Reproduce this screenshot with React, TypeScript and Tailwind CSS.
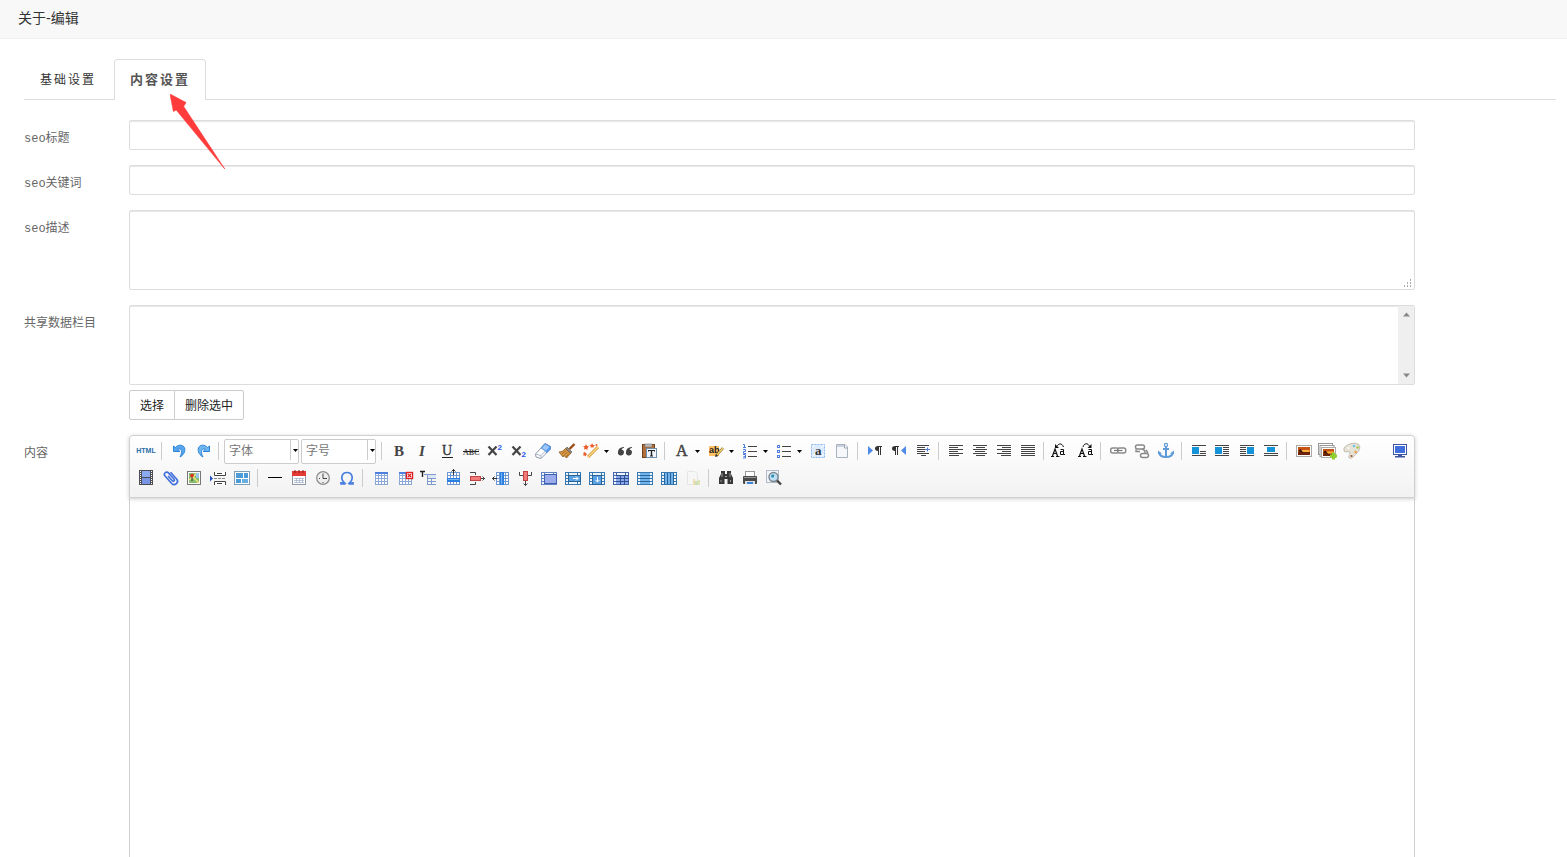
import type { ReactNode } from "react";

const range = (n: number) => Array.from({ length: n }, (_, i) => i);

const Lines = ({ rows, color = "#444" }: { rows: [number, number, number][]; color?: string }) => (
  <>
    {rows.map(([x, y, w], i) => (
      <rect key={i} x={x} y={y} width={w} height="1" fill={color} />
    ))}
  </>
);

// small grid used by all the table tools
const Grid = ({ x = 4, y = 4, w = 13, h = 13, step = 3, color = "#8aa8d6", fill = "#fff" }) => (
  <>
    <rect x={x} y={y} width={w} height={h} fill={fill} />
    {range(Math.floor((w - 1) / step) + 1).map((i) => (
      <rect key={"c" + i} x={x + i * step} y={y} width="1" height={h} fill={color} />
    ))}
    {range(Math.floor((h - 1) / step) + 1).map((i) => (
      <rect key={"r" + i} x={x} y={y + i * step} width={w} height="1" fill={color} />
    ))}
  </>
);

const CellFrame = ({ children, edge = "#3a78b0" }: { children?: ReactNode; edge?: string }) => (
  <>
    <rect x="2" y="4" width="16" height="13" fill="#eef5fc" />
    <path d="M2 4.5H18M2 16.5H18M2.5 4V17M17.5 4V17" stroke={edge} />
    <path d="M2 7.5H5M15 7.5H18M2 10.5H5M15 10.5H18M2 13.5H5M15 13.5H18M5.5 4V17M14.5 4V17" stroke={edge} />
    {children}
  </>
);

const Pilcrow = ({ x }: { x: number }) => (
  <path d={`M${x + 7} 5H${x + 3}C${x - 1} 5 ${x - 1} 10 ${x + 3} 10V14H${x + 4}V6H${x + 5}V14H${x + 6}V6H${x + 7}Z`} fill="#333" />
);

const Picture = ({ x, y, w, h }: { x: number; y: number; w: number; h: number }) => (
  <>
    <rect x={x} y={y} width={w} height={h} fill="#fff" stroke="#aaa" />
    <rect x={x + 1.5} y={y + 1.5} width={w - 3} height={h - 3} fill="#c65312" />
    <rect x={x + 1.5} y={y + h / 2 + 1} width={w - 3} height={h / 2 - 2.5} fill="#6e2409" />
    <rect x={x + 5} y={y + h / 2 - 1} width={w - 7} height="2" fill="#f9b13b" />
    <path d={`M${x + 1.5} ${y + h / 2}L${x + 4} ${y + h / 2 - 2}L${x + 7} ${y + h / 2 + 2}Z`} fill="#3b1308" />
  </>
);

const icons: Record<string, ReactNode> = {
  undo: (
    <path
      d="M4.5 5V10.5H11L8.6 8.4C11.6 6.6 14.4 9.5 11 16C17.6 12.5 17.2 4 11.2 4.2C9 4.3 7.4 5.2 6.4 6.6Z"
      fill="#58a6ee"
      stroke="#2a84d8"
      strokeLinejoin="round"
    />
  ),
  redo: (
    <path
      d="M16.5 5V10.5H10L12.4 8.4C9.4 6.6 6.6 9.5 10 16C3.4 12.5 3.8 4 9.8 4.2C12 4.3 13.6 5.2 14.6 6.6Z"
      fill="#6db6f2"
      stroke="#2a84d8"
      strokeLinejoin="round"
    />
  ),
  bold: <text x="5" y="15" fontSize="15" fontWeight="bold" className="font-['Liberation_Serif',serif]" fill="#444">B</text>,
  italic: <text x="6" y="15" fontSize="15" fontWeight="bold" fontStyle="italic" className="font-['Liberation_Serif',serif]" fill="#444">I</text>,
  underline: (
    <>
      <text x="5" y="14" fontSize="14" className="font-['Liberation_Serif',serif]" fill="#333" stroke="#333" strokeWidth=".3">U</text>
      <rect x="5" y="16" width="11" height="1" fill="#222" />
    </>
  ),
  strike: (
    <>
      <text x="2" y="14" fontSize="8" fontWeight="bold" className="font-['Liberation_Serif',serif]" fill="#555">ABC</text>
      <rect x="2" y="10" width="16" height="1" fill="#222" />
    </>
  ),
  superscript: (
    <>
      <path d="M3.5 5.5L11.5 14M11.5 5.5L3.5 14" stroke="#444" strokeWidth="2.2" />
      <text x="12.5" y="9" fontSize="8" fontWeight="bold" className="font-['Liberation_Sans',sans-serif]" fill="#2557e6">2</text>
    </>
  ),
  subscript: (
    <>
      <path d="M3.5 5.5L11.5 14M11.5 5.5L3.5 14" stroke="#444" strokeWidth="2.2" />
      <text x="12.5" y="16" fontSize="8" fontWeight="bold" className="font-['Liberation_Sans',sans-serif]" fill="#2557e6">2</text>
    </>
  ),
  eraser: (
    <>
      <path d="M2.5 13L12 2.5L17.5 5.5V8L8 17.5L3 16Z" fill="#fff" stroke="#8d9bb0" strokeLinejoin="round" />
      <path d="M8 7L12 2.5L17.5 5.5V8L13.5 12L12.5 10Z" fill="#4f97f2" stroke="#5a8fd4" strokeWidth=".8" strokeLinejoin="round" />
      <path d="M9 7L12.3 3.5L16.5 6L13 9.5Z" fill="#9cc8fb" />
      <path d="M2.5 13L8 14.5V17.5M8 14.5L12.5 10" stroke="#a9b4c4" fill="none" />
    </>
  ),
  brush: (
    <>
      <path d="M17.5 3L12.5 8" stroke="#9a4d17" strokeWidth="2.4" />
      <path d="M10 6L15 11L13 12.5L8.5 8Z" fill="#8a8a8a" stroke="#5e4a30" strokeWidth=".6" />
      <path d="M8.5 7.5L13.5 12.5L9.5 17L7 14.5L6 16L2 11C5 11 6.5 9.5 8.5 7.5Z" fill="#d99a48" stroke="#8c5316" strokeWidth=".8" />
      <path d="M9 9.5L5 13M10.5 11L7 14.5M12 12.5L9 16" stroke="#8c5316" strokeWidth=".7" />
    </>
  ),
  wand: (
    <>
      <path d="M7 16L17 6" stroke="#d8912d" strokeWidth="3" />
      <path d="M7 16L17 6" stroke="#fbe08d" strokeWidth="1.2" />
      <path d="M5 3L6 5L8 5.5L6.5 7L6.5 9L5 8L3 8.5L3.5 6.5L2 5L4.2 5Z" fill="#ec5a26" />
      <path d="M11 2L12 4L14 4L12.5 5.5L12.5 7L11 6L9.5 7L9.8 5.2L8.5 4L10.4 3.8Z" fill="#ec5a26" />
      <path d="M4 11L5 12.5L6.5 13L5 14L4.8 15.5L3.5 14.5L2 14.5L2.8 13L2 12Z" fill="#ec5a26" />
      <circle cx="15.5" cy="4" r="1" fill="#ec5a26" />
    </>
  ),
  quote: (
    <>
      <path d="M9 6C5 6.2 3 8 3 11A3 3 0 1 0 6.5 8.6C6.8 7.6 7.8 7 9 7Z" fill="#444" />
      <path d="M17 6C13 6.2 11 8 11 11A3 3 0 1 0 14.5 8.6C14.8 7.6 15.8 7 17 7Z" fill="#444" />
    </>
  ),
  paste: (
    <>
      <rect x="3.5" y="3.5" width="12" height="13" fill="#b0703b" stroke="#74431d" />
      <rect x="6" y="3" width="7" height="3" fill="#bbb" stroke="#777" strokeWidth=".6" />
      <rect x="7.5" y="7.5" width="10" height="9" fill="#eef5fc" stroke="#6f8fad" />
      <path d="M9 10.5V9H16V10.5H15V10H13.2V14.5H14V15.5H11V14.5H11.8V10H10V10.5Z" fill="#222" />
    </>
  ),
  color: (
    <text x="4" y="15" fontSize="16" className="font-['Liberation_Serif',serif]" fill="#444" stroke="#444" strokeWidth=".5">A</text>
  ),
  highlight: (
    <>
      <rect x="3" y="5" width="10" height="10" fill="#ffc266" />
      <text x="3" y="12" fontSize="9" fontWeight="bold" className="font-['Liberation_Sans',sans-serif]" fill="#222">ab</text>
      <path d="M10 15L17 7" stroke="#8f6b21" strokeWidth="2.6" />
      <path d="M11 14L17 7" stroke="#f4d575" strokeWidth="1.2" />
      <path d="M9 16L10 13L12 15Z" fill="#333" />
    </>
  ),
  ordered: (
    <>
      <Lines rows={[[8, 5, 9], [8, 10, 9], [8, 15, 9]]} />
      <path d="M3 3.5H4.5V7M3 6.5H6M3 8.5H5.5V10.5H3.5V12.5H6M3 13.5H5.5V17H3M3.5 15.5H5.5" stroke="#4c7de0" fill="none" />
    </>
  ),
  bullets: (
    <>
      <Lines rows={[[8, 5, 9], [8, 10, 9], [8, 15, 9]]} />
      {[4.5, 9.5, 14.5].map((y) => (
        <rect key={y} x="3.5" y={y} width="2" height="2" fill="#fff" stroke="#4c7de0" />
      ))}
    </>
  ),
  selectAll: (
    <>
      <rect x="3.5" y="3.5" width="13" height="13" fill="#dcebfd" stroke="#8cb9ee" strokeDasharray="2 1" />
      <path d="M4 7L7 4M4 16L7 13M13 16L16 13M13 7L16 4" stroke="#fff" />
      <text x="7" y="14" fontSize="13" fontWeight="bold" className="font-['Liberation_Serif',serif]" fill="#333">a</text>
    </>
  ),
  clearDoc: (
    <>
      <path d="M4.5 3.5H13L15.5 6V16.5H4.5Z" fill="#f5f7fa" stroke="#a8b2be" />
      <path d="M5 5H12" stroke="#c9d3df" strokeWidth="2" />
      <path d="M12.5 4V7H15" fill="#fff" stroke="#9ca8b5" />
    </>
  ),
  ltr: (
    <>
      <path d="M3 5L8 9.5L3 14Z" fill="#4f8ae8" />
      <Pilcrow x={10} />
    </>
  ),
  rtl: (
    <>
      <path d="M17 5L12 9.5L17 14Z" fill="#4f8ae8" />
      <Pilcrow x={3} />
    </>
  ),
  indent: (
    <>
      <Lines rows={[[4, 4, 12], [4, 6, 8], [4, 8, 8], [4, 10, 8], [4, 12, 12], [8, 14, 5]]} />
      <path d="M12 8.5H17M14.5 6.5V10.5" stroke="#4c7de0" />
    </>
  ),
  alignLeft: <Lines rows={[[3, 4, 14], [3, 6, 9], [3, 8, 14], [3, 10, 9], [3, 12, 14], [3, 14, 10]]} />,
  alignCenter: <Lines rows={[[3, 4, 14], [6, 6, 9], [3, 8, 14], [5, 10, 10], [3, 12, 14], [6, 14, 9]]} />,
  alignRight: <Lines rows={[[3, 4, 14], [8, 6, 9], [3, 8, 14], [8, 10, 9], [3, 12, 14], [7, 14, 10]]} />,
  alignJustify: <Lines rows={[[3, 4, 14], [3, 6, 14], [3, 8, 14], [3, 10, 14], [3, 12, 14], [3, 14, 14]]} />,
  upper: (
    <>
      <path d="M1.5 15L4 8L6.5 15M2.5 12.5H6M0 15.5H3M5 15.5H8.5" stroke="#111" strokeWidth="1.2" fill="none" />
      <path d="M9.5 8.5H12.5V13.5H14M12.5 10.5H9.5V13.5H12.5" stroke="#111" fill="none" />
      <path d="M6 5.5C7 2.5 11 1.5 12.5 6" stroke="#111" fill="none" />
      <path d="M4 3V7H8Z" fill="#111" />
    </>
  ),
  lower: (
    <>
      <path d="M4.5 15L7 8L9.5 15M5.5 12.5H9M3 15.5H6M8 15.5H11.5" stroke="#111" strokeWidth="1.2" fill="none" />
      <path d="M13.5 8.5H16.5V13.5H18M16.5 10.5H13.5V13.5H16.5" stroke="#111" fill="none" />
      <path d="M8 6C9 2 13 1.5 14.5 5.5" stroke="#111" fill="none" />
      <path d="M16.5 3V7H12.5Z" fill="#111" />
    </>
  ),
  link: (
    <>
      <rect x="2.7" y="7" width="8" height="5" rx="2" fill="#fff" stroke="#8a8a8a" strokeWidth="1.5" />
      <rect x="9.7" y="7" width="8" height="5" rx="2" fill="#fff" stroke="#8a8a8a" strokeWidth="1.5" />
      <path d="M6 9.5H14.5" stroke="#777" strokeWidth="1.2" />
    </>
  ),
  unlink: (
    <>
      <rect x="3.5" y="4" width="9" height="4" rx="2" fill="#fff" stroke="#888" strokeWidth="1.4" />
      <rect x="8.5" y="12.5" width="8" height="4" rx="2" fill="#fff" stroke="#888" strokeWidth="1.4" />
      <path d="M4 8.5V10.5H8M10 8C13 9 13 10 13 12M14 9L16 12" stroke="#888" strokeWidth="1.4" fill="none" />
    </>
  ),
  anchor: (
    <>
      <circle cx="10" cy="4" r="1.6" fill="#fff" stroke="#5c9bd8" strokeWidth="1.2" />
      <path d="M10 6V16M7 8H13" stroke="#5c9bd8" strokeWidth="2" />
      <path d="M3 11.5C4 17.5 16 17.5 17 11.5" stroke="#5c9bd8" strokeWidth="2" fill="none" />
      <path d="M2 13V9.5L6 12.5ZM18 13V9.5L14 12.5Z" fill="#5c9bd8" />
    </>
  ),
  imgNone: (
    <>
      <Lines rows={[[3, 4, 14], [11, 10, 6], [11, 12, 6], [3, 14, 14]]} />
      <rect x="3" y="6" width="7" height="7" fill="#1593d8" />
    </>
  ),
  imgLeft: (
    <>
      <Lines rows={[[2, 4, 14], [10, 6, 6], [10, 8, 6], [10, 10, 6], [10, 12, 6], [2, 14, 14]]} />
      <rect x="2" y="6" width="7" height="7" fill="#1593d8" />
    </>
  ),
  imgRight: (
    <>
      <Lines rows={[[3, 4, 14], [3, 6, 6], [3, 8, 6], [3, 10, 6], [3, 12, 6], [3, 14, 14]]} />
      <rect x="10" y="6" width="7" height="7" fill="#1593d8" />
    </>
  ),
  imgCenter: (
    <>
      <Lines rows={[[3, 4, 14], [3, 12, 14], [3, 14, 14]]} />
      <rect x="6" y="6" width="8" height="5" fill="#1593d8" />
    </>
  ),
  image: <Picture x={2.5} y={4.5} w={15} h={11} />,
  images: (
    <>
      <rect x="0.5" y="2.5" width="14" height="11" fill="#fff" stroke="#999" />
      <rect x="2" y="4.5" width="14" height="11" fill="#fff" stroke="#999" />
      <Picture x={3.5} y={6.5} w={14} h={10} />
      <path d="M14 11.5H17V13.5H19V16.5H17V18.5H14V16.5H12V13.5H14Z" fill="#8fd02c" />
    </>
  ),
  palette: (
    <>
      <path d="M2 7C5 3 12 1 16 3C19 5 18 9 15 12C12 15 10 18 7.5 17C5 16 9 13 8 11.5C6 9.5 3 12 2 10Z" fill="#e6e2d6" stroke="#b6b0a4" strokeWidth=".8" />
      <circle cx="12" cy="5" r="1.2" fill="#6dc0ec" />
      <circle cx="15.5" cy="6.5" r="1.2" fill="#a0c850" />
      <circle cx="13.5" cy="11" r="1.2" fill="#ee9a3c" />
      <circle cx="9.5" cy="15" r="1.1" fill="#a3592b" />
      <circle cx="6.5" cy="7" r="1" fill="#fff" />
    </>
  ),
  fullscreen: (
    <>
      <rect x="3.5" y="3.5" width="13" height="10" fill="#fff" stroke="#4055a0" />
      <rect x="5" y="5" width="10" height="7" fill="#3f6fdb" />
      <rect x="8" y="14" width="4" height="1" fill="#4055a0" />
      <rect x="5" y="15" width="10" height="1.5" fill="#4055a0" />
    </>
  ),
  video: (
    <>
      <rect x="3" y="2" width="14" height="15" fill="#4c4c52" />
      <rect x="6" y="3" width="8" height="6" fill="#8caaf0" />
      <rect x="6" y="10" width="8" height="6" fill="#7795e4" />
      {range(7).map((i) => (
        <path key={i} d={`M4 ${3.5 + i * 2}H5M15 ${3.5 + i * 2}H16`} stroke="#fff" />
      ))}
    </>
  ),
  attach: (
    <g transform="rotate(-42 11 10)">
      <path d="M14.5 5.5V14.5A3.3 3.3 0 0 1 7.9 14.5V4.5A2.3 2.3 0 0 1 12.5 4.5V13A1.2 1.2 0 0 1 10.1 13V6.5" fill="none" stroke="#3f6fdd" strokeWidth="1.6" />
    </g>
  ),
  map: (
    <>
      <rect x="3.5" y="3.5" width="13" height="13" fill="#fff" stroke="#777" />
      <rect x="5" y="5" width="10" height="10" fill="#86bd6e" />
      <path d="M5 12L9 9L15 15M9 9L13 5" stroke="#f5e27a" strokeWidth="1.4" />
      <rect x="12" y="5" width="3" height="5" fill="#93c7ee" />
      <circle cx="8" cy="7.5" r="1.8" fill="#dd2c20" />
      <path d="M8 9V13" stroke="#333" />
    </>
  ),
  pagebreak: (
    <>
      <path d="M6.5 4V7.5H17.5V4M6.5 17V13.5H17.5V17" stroke="#444" fill="#fff" />
      <path d="M9 5.5H14M9 15.5H14" stroke="#444" />
      <path d="M6 10.5H18" stroke="#888" strokeDasharray="3 1" />
      <path d="M2 7.5L5 10.5L2 13.5Z" fill="#2456c0" />
    </>
  ),
  template: (
    <>
      <rect x="2.5" y="3.5" width="15" height="13" fill="#fff" stroke="#7f9fb8" />
      <rect x="4" y="5" width="7" height="5" fill="#4d9cda" />
      <rect x="12" y="5" width="4" height="5" fill="#4d9cda" />
      <rect x="4" y="11" width="5" height="4" fill="#4d9cda" />
      <rect x="10" y="11" width="6" height="4" fill="#68afe2" />
    </>
  ),
  hr: <rect x="3" y="9" width="14" height="1" fill="#000" />,
  date: (
    <>
      <rect x="3.5" y="4.5" width="13" height="12" fill="#fff" stroke="#8f96a3" />
      <rect x="3" y="3" width="14" height="5" fill="#e23b36" />
      <path d="M6 2V5M10 2V5M14 2V5" stroke="#8c1d1a" />
      <path d="M5 10.5H15M5 12.5H15M5 14.5H15M7.5 10V15M10.5 10V15M13.5 10V15" stroke="#a7b5cc" strokeWidth=".8" />
    </>
  ),
  time: (
    <>
      <circle cx="10" cy="10" r="6.3" fill="#eee" stroke="#8e8e8e" strokeWidth="1.3" />
      <path d="M10 5.5V10.5H14M6 10.5H7M10 14V15" stroke="#444" fill="none" />
    </>
  ),
  special: (
    <path d="M4 15H7.5C3 11 4.5 4.5 10 4.5C15.5 4.5 17 11 12.5 15H16M4 14V16H8.5M16 14V16H11.5" fill="none" stroke="#4a7de0" strokeWidth="1.7" />
  ),
  table: (
    <>
      <Grid />
      <rect x="4" y="4" width="13" height="2" fill="#4f7fdd" />
    </>
  ),
  tableDelete: (
    <>
      <Grid />
      <rect x="4" y="4" width="13" height="2" fill="#4f7fdd" />
      <rect x="11.5" y="4.5" width="6" height="6" fill="#fff" stroke="#e02020" strokeWidth="1.4" />
      <path d="M13 6L16 9M16 6L13 9" stroke="#e02020" strokeWidth="1.2" />
    </>
  ),
  tableTitle: (
    <>
      <path d="M1 3.5H6M3.5 3V9" stroke="#222" strokeWidth="1.4" />
      <path d="M5 6.5H17M8.5 7V17M8 10.5H17M8 13.5H17M8 16.5H17M12.5 10V17" stroke="#7e9bcb" />
      <rect x="9" y="7" width="8" height="3" fill="#dce6f6" />
    </>
  ),
  rowInsert: (
    <>
      <Grid x={4} y={4} w={13} h={13} color="#6f98d2" />
      <rect x="4" y="10" width="13" height="4" fill="#2b7fe0" />
      <rect x="5" y="11" width="11" height="1" fill="#79b4f4" />
      <path d="M10.5 1V7M8.5 3.5L10.5 1.5L12.5 3.5" stroke="#333" fill="none" />
    </>
  ),
  rowDelete: (
    <>
      <path d="M3 4.5H8.5V7M3 16.5H8.5V14M13 10.5H18M15.5 8.5L17.5 10.5L15.5 12.5" stroke="#444" fill="none" />
      <rect x="3.5" y="8.5" width="10" height="4" fill="#f07a78" stroke="#c04444" />
    </>
  ),
  colInsert: (
    <>
      <Grid x={5} y={4} w={13} h={13} color="#6f98d2" />
      <rect x="9" y="4" width="4" height="13" fill="#2b7fe0" />
      <rect x="10" y="5" width="1" height="11" fill="#79b4f4" />
      <path d="M1 10.5H6M3.5 8.5L1.5 10.5L3.5 12.5" stroke="#333" fill="none" />
    </>
  ),
  colDelete: (
    <>
      <path d="M4.5 4V7.5H8M16.5 4V7.5H13M10.5 12V18M8.5 15.5L10.5 17.5L12.5 15.5" stroke="#444" fill="none" />
      <rect x="8.5" y="3.5" width="4" height="9" fill="#f07a78" stroke="#c04444" />
    </>
  ),
  mergeCells: (
    <CellFrame edge="#6184c4">
      <rect x="5.5" y="6.5" width="12" height="9" fill="#9aacec" stroke="#4160b0" />
    </CellFrame>
  ),
  mergeRight: (
    <CellFrame>
      <rect x="5.5" y="7.5" width="12" height="6" fill="#5ba3e4" stroke="#2a6395" />
      <path d="M10 10.5H15M13 8.5L15 10.5L13 12.5" stroke="#fff" fill="none" />
    </CellFrame>
  ),
  mergeDown: (
    <CellFrame>
      <rect x="5.5" y="7.5" width="9" height="9" fill="#5ba3e4" stroke="#2a6395" />
      <path d="M10.5 9V14M8.5 12L10.5 14L12.5 12" stroke="#fff" fill="none" />
    </CellFrame>
  ),
  splitCells: (
    <CellFrame edge="#4566a8">
      <rect x="5" y="7" width="12" height="9" fill="#8ca8ea" />
      <path d="M5 7.5H18M5 10.5H18M5 13.5H18M9.5 7V17M13.5 7V17" stroke="#2d4f94" />
    </CellFrame>
  ),
  splitRows: (
    <CellFrame>
      <rect x="5" y="5" width="10" height="11" fill="#6fb2ec" />
      <path d="M5 7.5H15M5 10.5H15M5 13.5H15" stroke="#2a6395" />
    </CellFrame>
  ),
  splitCols: (
    <CellFrame>
      <rect x="5" y="5" width="10" height="11" fill="#6fb2ec" />
      <path d="M5.5 5V16M8.5 5V16M11.5 5V16M14.5 5V16" stroke="#2a6395" />
    </CellFrame>
  ),
  chart: (
    <g opacity=".4">
      <path d="M4.5 3.5H12L14.5 6V16.5H4.5Z" fill="#f8f8f8" stroke="#ccc" />
      <rect x="10" y="11" width="2" height="6" fill="#e8b84a" />
      <rect x="12" y="13" width="3" height="4" fill="#8cc152" />
      <rect x="15" y="12" width="2" height="5" fill="#b9c95a" />
    </g>
  ),
  search: (
    <>
      <path d="M5 3H9V6H11V3H15V6L17 10V16H11.5V11H8.5V16H3V10L5 6Z" fill="#383838" />
      <path d="M6 5V9M14 5V9M5 12V14M14.5 12V14" stroke="#999" />
      <rect x="9" y="8" width="2" height="1" fill="#aaa" />
    </>
  ),
  print: (
    <>
      <rect x="5.5" y="3.5" width="9" height="5" fill="#fff" stroke="#999" />
      <rect x="3" y="8" width="14" height="8" rx="1" fill="#4a4a4a" />
      <rect x="4" y="9" width="12" height="1" fill="#999" />
      <rect x="5" y="13" width="10" height="3" fill="#ddd" />
      <rect x="7" y="14" width="6" height="2" fill="#3d84dd" />
    </>
  ),
  preview: (
    <>
      <rect x="2.5" y="2.5" width="12" height="12" fill="#f2f5f8" stroke="#b3bcc6" />
      <circle cx="9.5" cy="9" r="4.5" fill="#bfe0f5" stroke="#7b8791" strokeWidth="1.4" />
      <path d="M7 7.5C9 5.5 11 6.5 10 8.5C9 10.5 7.5 10 7 7.5Z" fill="#2f8fae" />
      <path d="M13 12.5L17 16.5" stroke="#444" strokeWidth="2.4" />
    </>
  ),
};

interface ToolProps {
  name: string;
  label: string;
}

const Tool = ({ name, label }: ToolProps) => (
  <button type="button" aria-label={label} className="flex h-5 w-6 shrink-0 items-center justify-center">
    <svg width="20" height="20" viewBox="0 0 20 20" fill="none" aria-hidden="true">
      {icons[name]}
    </svg>
  </button>
);

const Caret = () => (
  <svg width="5" height="3" viewBox="0 0 5 3" className="shrink-0" aria-hidden="true">
    <path d="M0 0H5L2.5 3Z" fill="#000" />
  </svg>
);

const SplitTool = ({ name, label }: ToolProps) => (
  <div className="flex shrink-0 items-center">
    <Tool name={name} label={label} />
    <button type="button" aria-label={`${label} 选项`} className="flex h-5 w-2.5 items-center pl-px">
      <Caret />
    </button>
  </div>
);

const Separator = () => <span className="ml-[3px] mr-[5px] h-[18px] w-px shrink-0 bg-[#ccc]" />;

const Combo = ({ label }: { label: string }) => (
  <div className="relative mr-0.5 h-[25px] w-[75px] shrink-0 self-end">
    <select
      aria-label={label}
      className="h-full w-full appearance-none rounded-xs border border-[#ccc] bg-white px-1 text-xs text-[#777]"
    >
      <option>{label}</option>
    </select>
    <span className="pointer-events-none absolute top-px right-px bottom-1 flex w-2 items-center border-l border-[#ccc] pl-0.5">
      <Caret />
    </span>
  </div>
);

const Tools = ({ items }: { items: [string, string][] }) => (
  <>
    {items.map(([name, label]) => (
      <Tool key={name} name={name} label={label} />
    ))}
  </>
);

const Toolbar = () => (
  <div className="relative flex flex-col gap-px rounded-t border border-[#d0d0d0] bg-linear-to-b from-white to-[#f2f2f2] pt-0.5 pr-0.5 pb-1.5 pl-1 shadow-[0_1px_4px_rgba(0,0,0,0.2)]">
    <div className="flex h-[26px] items-center">
      <button
        type="button"
        className="flex h-5 w-6 shrink-0 items-center justify-center font-['Liberation_Sans',sans-serif] text-[7px] font-bold text-[#2a6ca8]"
      >
        HTML
      </button>
      <Separator />
      <Tools items={[["undo", "撤销"], ["redo", "重做"]]} />
      <Separator />
      <Combo label="字体" />
      <Combo label="字号" />
      <Separator />
      <Tools
        items={[
          ["bold", "加粗"],
          ["italic", "斜体"],
          ["underline", "下划线"],
          ["strike", "删除线"],
          ["superscript", "上标"],
          ["subscript", "下标"],
          ["eraser", "清除格式"],
          ["brush", "格式刷"],
        ]}
      />
      <SplitTool name="wand" label="自动排版" />
      <Tools items={[["quote", "引用"], ["paste", "纯文本粘贴"]]} />
      <Separator />
      <SplitTool name="color" label="字体颜色" />
      <SplitTool name="highlight" label="背景色" />
      <SplitTool name="ordered" label="有序列表" />
      <SplitTool name="bullets" label="无序列表" />
      <Tools items={[["selectAll", "全选"], ["clearDoc", "清空文档"]]} />
      <Separator />
      <Tools items={[["ltr", "从左向右输入"], ["rtl", "从右向左输入"], ["indent", "首行缩进"]]} />
      <Separator />
      <Tools
        items={[
          ["alignLeft", "居左对齐"],
          ["alignCenter", "居中对齐"],
          ["alignRight", "居右对齐"],
          ["alignJustify", "两端对齐"],
        ]}
      />
      <Separator />
      <Tools items={[["upper", "字母大写"], ["lower", "字母小写"]]} />
      <Separator />
      <Tools items={[["link", "超链接"], ["unlink", "取消链接"], ["anchor", "锚点"]]} />
      <Separator />
      <Tools items={[["imgNone", "默认"], ["imgLeft", "左浮动"], ["imgRight", "右浮动"], ["imgCenter", "居中"]]} />
      <Separator />
      <Tools items={[["image", "单图上传"], ["images", "多图上传"], ["palette", "涂鸦"]]} />
      <div className="ml-auto">
        <Tool name="fullscreen" label="全屏" />
      </div>
    </div>
    <div className="flex h-[26px] items-center">
      <Tools
        items={[
          ["video", "视频"],
          ["attach", "附件"],
          ["map", "地图"],
          ["pagebreak", "分页"],
          ["template", "模板"],
        ]}
      />
      <Separator />
      <Tools items={[["hr", "分隔线"], ["date", "日期"], ["time", "时间"], ["special", "特殊字符"]]} />
      <Separator />
      <div className="flex pl-px">
        <Tools
          items={[
            ["table", "插入表格"],
            ["tableDelete", "删除表格"],
            ["tableTitle", "表格前插入行"],
            ["rowInsert", "前插入行"],
            ["rowDelete", "删除行"],
            ["colInsert", "前插入列"],
            ["colDelete", "删除列"],
            ["mergeCells", "合并单元格"],
            ["mergeRight", "右合并单元格"],
            ["mergeDown", "下合并单元格"],
            ["splitCells", "完全拆分单元格"],
            ["splitRows", "拆分成行"],
            ["splitCols", "拆分成列"],
            ["chart", "图表"],
          ]}
        />
      </div>
      <Separator />
      <Tools items={[["search", "查询替换"], ["print", "打印"], ["preview", "预览"]]} />
    </div>
  </div>
);

interface FieldProps {
  id: string;
  label: string;
  className?: string;
  children: ReactNode;
}

const Field = ({ id, label, className = "", children }: FieldProps) => (
  <div className={`flex ${className}`}>
    <label htmlFor={id} className="w-[105px] shrink-0 pt-2 text-xs leading-[22px] text-[#666]">
      {label}
    </label>
    <div className="flex min-w-0 flex-1 flex-col">{children}</div>
  </div>
);

const inputStyle =
  "block w-full rounded-xs border border-[#ddd] bg-white text-xs text-[#333] shadow-[inset_0_1px_1px_rgba(0,0,0,0.1)] outline-none";

const PointerArrow = () => (
  <svg
    width="56"
    height="76"
    viewBox="0 0 56 76"
    className="pointer-events-none absolute top-[35px] left-[56px] z-10"
    aria-hidden="true"
  >
    <path d="M0 0L16 8.5L13.7 12.5L54.8 75L6.2 16L3.4 17.5Z" fill="#ff3b3b" stroke="#ff3b3b" strokeWidth=".6" />
  </svg>
);

export default function App() {
  return (
    <div className="flex min-h-screen flex-col bg-white font-['Liberation_Mono','Noto_Sans_CJK_SC',monospace] text-xs">
      <header className="flex h-[39px] items-center border-b border-[#eee] bg-[#f8f8f8] px-[18px] pb-0.5">
        <h1 className="font-['Liberation_Sans','Noto_Sans_CJK_SC',sans-serif] text-sm leading-5 text-[#333]">关于-编辑</h1>
      </header>

      <main className="flex flex-1 flex-col pt-5 pr-[11px] pl-6">
        <div role="tablist" className="flex h-[41px] border-b border-[#ddd]">
          <button type="button" role="tab" aria-selected="false" className="mr-0.5 px-4 pt-1 text-xs tracking-[2px] text-[#333]">
            基础设置
          </button>
          <div className="relative">
            <button
              type="button"
              role="tab"
              aria-selected="true"
              className="h-[41px] rounded-t border border-b-0 border-[#ddd] bg-white px-[15px] pt-0.5 text-[13px] font-bold tracking-[2px] text-[#555]"
            >
              内容设置
            </button>
            <PointerArrow />
          </div>
        </div>

        <form className="flex flex-1 flex-col gap-[15px] pt-5 pr-[141px]">
          <Field id="seo-title" label="seo标题">
            <input id="seo-title" type="text" className={`h-[30px] px-2 ${inputStyle}`} />
          </Field>
          <Field id="seo-keywords" label="seo关键词">
            <input id="seo-keywords" type="text" className={`h-[30px] px-2 ${inputStyle}`} />
          </Field>
          <Field id="seo-desc" label="seo描述">
            <div className="relative">
              <textarea id="seo-desc" className={`h-20 resize-none p-2 ${inputStyle}`} />
              <svg width="9" height="9" viewBox="0 0 9 9" className="absolute right-[3px] bottom-[2px]" aria-hidden="true">
                <path d="M7 0h1v2h-1zM4 3h1v2h-1zM7 3h1v2h-1zM1 6h1v2h-1zM4 6h1v2h-1zM7 6h1v2h-1z" fill="#aaa" />
              </svg>
            </div>
          </Field>
          <Field id="share-columns" label="共享数据栏目">
            <div className="relative">
              <select id="share-columns" multiple className={`h-20 overflow-hidden ${inputStyle}`} />
              <div className="absolute inset-y-px right-px flex w-4 flex-col items-center justify-between bg-[#efefef] py-1.5">
                <svg width="7" height="5" viewBox="0 0 7 5" aria-hidden="true">
                  <path d="M3.5 0.5L7 4.5H0Z" fill="#888" />
                </svg>
                <svg width="7" height="5" viewBox="0 0 7 5" aria-hidden="true">
                  <path d="M3.5 4.5L7 0.5H0Z" fill="#888" />
                </svg>
              </div>
            </div>
            <div className="mt-[5px] flex">
              <button type="button" className="h-[30px] rounded-l-xs border border-[#ccc] bg-white px-2.5 pt-1 text-[#222]">
                选择
              </button>
              <button type="button" className="-ml-px h-[30px] rounded-r-xs border border-[#ccc] bg-white px-2.5 pt-1 text-[#222]">
                删除选中
              </button>
            </div>
          </Field>
          <Field id="content" label="内容" className="flex-1">
            <Toolbar />
            <textarea id="content" className="block w-full flex-1 resize-none border-x border-[#d0d0d0] p-2 outline-none" />
          </Field>
        </form>
      </main>
    </div>
  );
}
